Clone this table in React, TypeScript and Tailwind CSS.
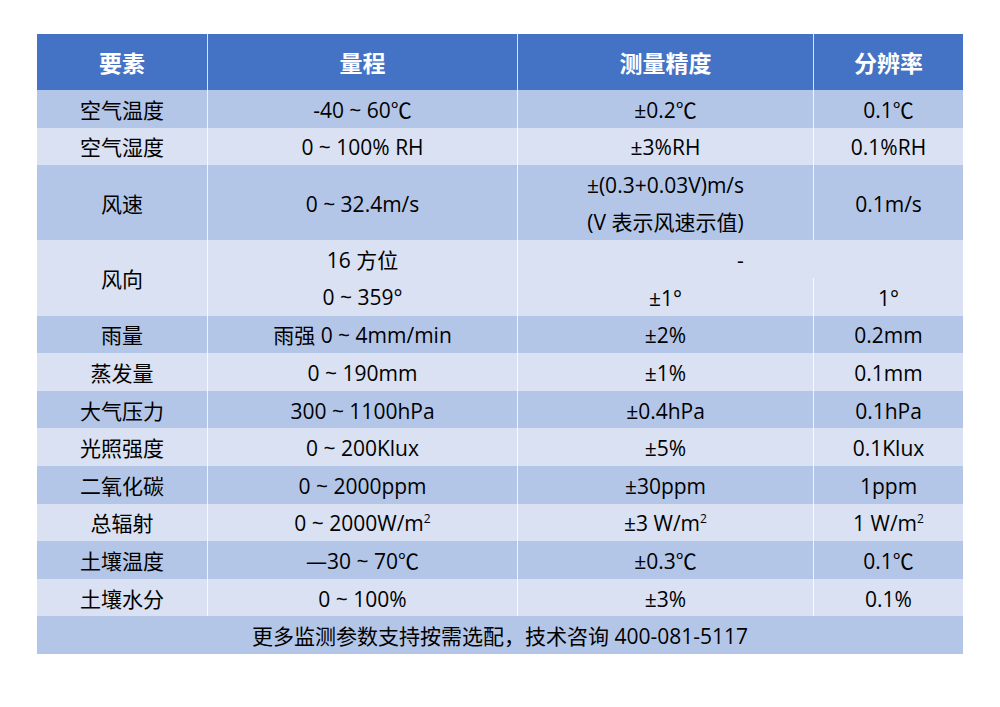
import React from 'react';

const DARK = 'bg-[#b4c6e7]';
const LIGHT = 'bg-[#d9e1f2]';

type Row = { name: string; range: React.ReactNode; accuracy: React.ReactNode; resolution: React.ReactNode };

const sup2 = (pre: string) => (
  <span>
    {pre}
    <sup className="text-[12px] -top-[0.7em]">2</sup>
  </span>
);

const rowsTop: Row[] = [
  { name: '空气温度', range: '-40 ~ 60℃', accuracy: '±0.2℃', resolution: '0.1℃' },
  { name: '空气湿度', range: '0 ~ 100% RH', accuracy: '±3%RH', resolution: '0.1%RH' },
];

const rowsBottom: Row[] = [
  { name: '雨量', range: '雨强 0 ~ 4mm/min', accuracy: '±2%', resolution: '0.2mm' },
  { name: '蒸发量', range: '0 ~ 190mm', accuracy: '±1%', resolution: '0.1mm' },
  { name: '大气压力', range: '300 ~ 1100hPa', accuracy: '±0.4hPa', resolution: '0.1hPa' },
  { name: '光照强度', range: '0 ~ 200Klux', accuracy: '±5%', resolution: '0.1Klux' },
  { name: '二氧化碳', range: '0 ~ 2000ppm', accuracy: '±30ppm', resolution: '1ppm' },
  { name: '总辐射', range: sup2('0 ~ 2000W/m'), accuracy: sup2('±3 W/m'), resolution: sup2('1 W/m') },
  { name: '土壤温度', range: '—30 ~ 70℃', accuracy: '±0.3℃', resolution: '0.1℃' },
  { name: '土壤水分', range: '0 ~ 100%', accuracy: '±3%', resolution: '0.1%' },
];

function Cell({ children, bg, line = true, className = '' }: { children?: React.ReactNode; bg: string; line?: boolean; className?: string }) {
  return (
    <div className={`flex flex-col items-center justify-center text-center pt-[3px] ${bg} ${line ? 'border-l border-white/80' : ''} ${className}`}>
      {children}
    </div>
  );
}

function SimpleRow({ row, bg }: { row: Row; bg: string }) {
  return (
    <>
      <Cell bg={bg} line={false}>{row.name}</Cell>
      <Cell bg={bg}>{row.range}</Cell>
      <Cell bg={bg}>{row.accuracy}</Cell>
      <Cell bg={bg}>{row.resolution}</Cell>
    </>
  );
}

export default function App() {
  return (
    <div className="w-[1000px] h-[707px] bg-white pt-[34px] pl-[37px]" style={{ fontFamily: '"Open Sans", "Noto Sans CJK SC", sans-serif' }}>
      <div className="grid grid-cols-[170px_310px_296px_150px] grid-rows-[56px_repeat(15,37.6px)] text-[21px] leading-none text-black">
        {/* header */}
        {['要素', '量程', '测量精度', '分辨率'].map((h, i) => (
          <Cell key={h} bg="bg-[#4472c4]" line={i > 0} className="text-white font-bold text-[23px]">
            {h}
          </Cell>
        ))}

        {rowsTop.map((r, i) => (
          <SimpleRow key={r.name} row={r} bg={i % 2 === 0 ? DARK : LIGHT} />
        ))}

        {/* 风速 */}
        <Cell bg={DARK} line={false} className="row-span-2">风速</Cell>
        <Cell bg={DARK} className="row-span-2">0 ~ 32.4m/s</Cell>
        <Cell bg={DARK} className="row-span-2 leading-[37.6px]">
          <span>±(0.3+0.03V)m/s</span>
          <span>(V 表示风速示值)</span>
        </Cell>
        <Cell bg={DARK} className="row-span-2">0.1m/s</Cell>

        {/* 风向 */}
        <Cell bg={LIGHT} line={false} className="row-span-2">风向</Cell>
        <Cell bg={LIGHT} className="row-span-2 leading-[37.6px]">
          <span>16 方位</span>
          <span>0 ~ 359°</span>
        </Cell>
        <Cell bg={LIGHT} className="col-span-2">-</Cell>
        <Cell bg={LIGHT}>±1°</Cell>
        <Cell bg={LIGHT}>1°</Cell>

        {rowsBottom.map((r, i) => (
          <SimpleRow key={r.name} row={r} bg={i % 2 === 0 ? DARK : LIGHT} />
        ))}

        {/* footer */}
        <Cell bg={DARK} line={false} className="col-span-4">
          更多监测参数支持按需选配，技术咨询 400-081-5117
        </Cell>
      </div>
    </div>
  );
}
